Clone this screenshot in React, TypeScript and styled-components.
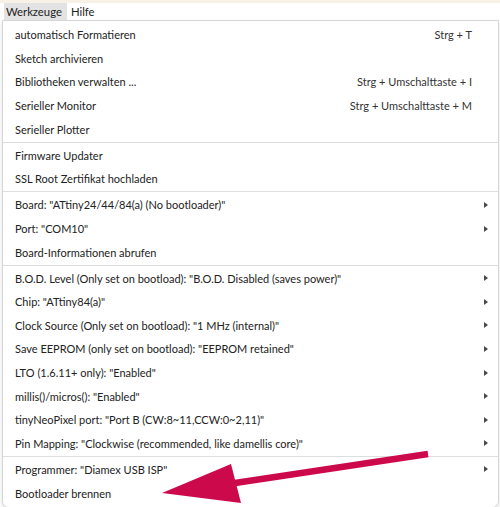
import React from "react";
import styled, { createGlobalStyle } from "styled-components";

const Global = createGlobalStyle`
  html, body { margin: 0; padding: 0; background: #ffffff; }
  body { font-family: Lato, "Open Sans", "Liberation Sans", sans-serif; color: #1b1b1b; }
`;

const Page = styled.div`
  position: relative;
  width: 500px;
  height: 507px;
  overflow: hidden;
  background: #ffffff;
`;

const TopStrip = styled.div`
  height: 3px;
  background: #f8f1e6;
`;

const MenuBar = styled.div`
  display: flex;
  height: 17px;
  padding-left: 4px;
  background: #ffffff;
`;

const BarItem = styled.div<{ $active?: boolean }>`
  display: flex;
  align-items: center;
  padding: 0 5px 0 2px;
  margin-right: 2px;
  font-size: 11.3px;
  color: #222;
  background: ${(p) => (p.$active ? "#e3e3e3" : "transparent")};
`;

const Dropdown = styled.div`
  margin: 0 1px 0 2px;
  border: 1px solid #d6d6d6;
  border-radius: 0 0 7px 7px;
  box-shadow: 0 2px 4px rgba(0, 0, 0, 0.12);
  padding: 2px 0 2px;
  background: #ffffff;
`;

const Row = styled.div`
  display: grid;
  grid-template-columns: 1fr auto 15px;
  align-items: center;
  height: 23.6px;
  padding: 0 9px 0 12px;
  font-size: 11px;
  color: #222;
  white-space: nowrap;
`;

const Shortcut = styled.span`
  color: #333;
  font-size: 11px;
  margin-right: 2px;
`;

const ArrowCell = styled.span`
  display: flex;
  justify-content: flex-end;
  align-items: center;
`;

const SubArrow = styled.span`
  width: 0;
  height: 0;
  border-top: 3.5px solid transparent;
  border-bottom: 3.5px solid transparent;
  border-left: 4.5px solid #4a4a4a;
  margin-right: 1px;
`;

const Separator = styled.div`
  height: 1px;
  margin: 0.8px 0 0.7px;
  background: #dedede;
`;

const Overlay = styled.svg`
  position: absolute;
  left: 0;
  top: 0;
  pointer-events: none;
`;

type Item = { label: string; shortcut?: string; sub?: boolean } | "sep";

const items: Item[] = [
  { label: "automatisch Formatieren", shortcut: "Strg + T" },
  { label: "Sketch archivieren" },
  { label: "Bibliotheken verwalten ...", shortcut: "Strg + Umschalttaste + I" },
  { label: "Serieller Monitor", shortcut: "Strg + Umschalttaste + M" },
  { label: "Serieller Plotter" },
  "sep",
  { label: "Firmware Updater" },
  { label: "SSL Root Zertifikat hochladen" },
  "sep",
  { label: 'Board: "ATtiny24/44/84(a) (No bootloader)"', sub: true },
  { label: 'Port: "COM10"', sub: true },
  { label: "Board-Informationen abrufen" },
  "sep",
  { label: 'B.O.D. Level (Only set on bootload): "B.O.D. Disabled (saves power)"', sub: true },
  { label: 'Chip: "ATtiny84(a)"', sub: true },
  { label: 'Clock Source (Only set on bootload): "1 MHz (internal)"', sub: true },
  { label: 'Save EEPROM (only set on bootload): "EEPROM retained"', sub: true },
  { label: 'LTO (1.6.11+ only): "Enabled"', sub: true },
  { label: 'millis()/micros(): "Enabled"', sub: true },
  { label: 'tinyNeoPixel port: "Port B (CW:8~11,CCW:0~2,11)"', sub: true },
  { label: 'Pin Mapping: "Clockwise (recommended, like damellis core)"', sub: true },
  "sep",
  { label: 'Programmer: "Diamex USB ISP"', sub: true },
  { label: "Bootloader brennen" },
];

export default function App() {
  return (
    <Page>
      <Global />
      <TopStrip />
      <MenuBar>
        <BarItem $active>Werkzeuge</BarItem>
        <BarItem>Hilfe</BarItem>
      </MenuBar>
      <Dropdown>
        {items.map((it, i) =>
          it === "sep" ? (
            <Separator key={i} />
          ) : (
            <Row key={i}>
              <span>{it.label}</span>
              <Shortcut>{it.shortcut ?? ""}</Shortcut>
              <ArrowCell>{it.sub ? <SubArrow /> : null}</ArrowCell>
            </Row>
          )
        )}
      </Dropdown>
      <Overlay width="500" height="507" viewBox="0 0 500 507">
        <line x1="428" y1="454" x2="215" y2="486" stroke="#cc0a4b" strokeWidth="6.5" />
        <polygon points="162,493 231,464 241,503" fill="#cc0a4b" />
      </Overlay>
    </Page>
  );
}
